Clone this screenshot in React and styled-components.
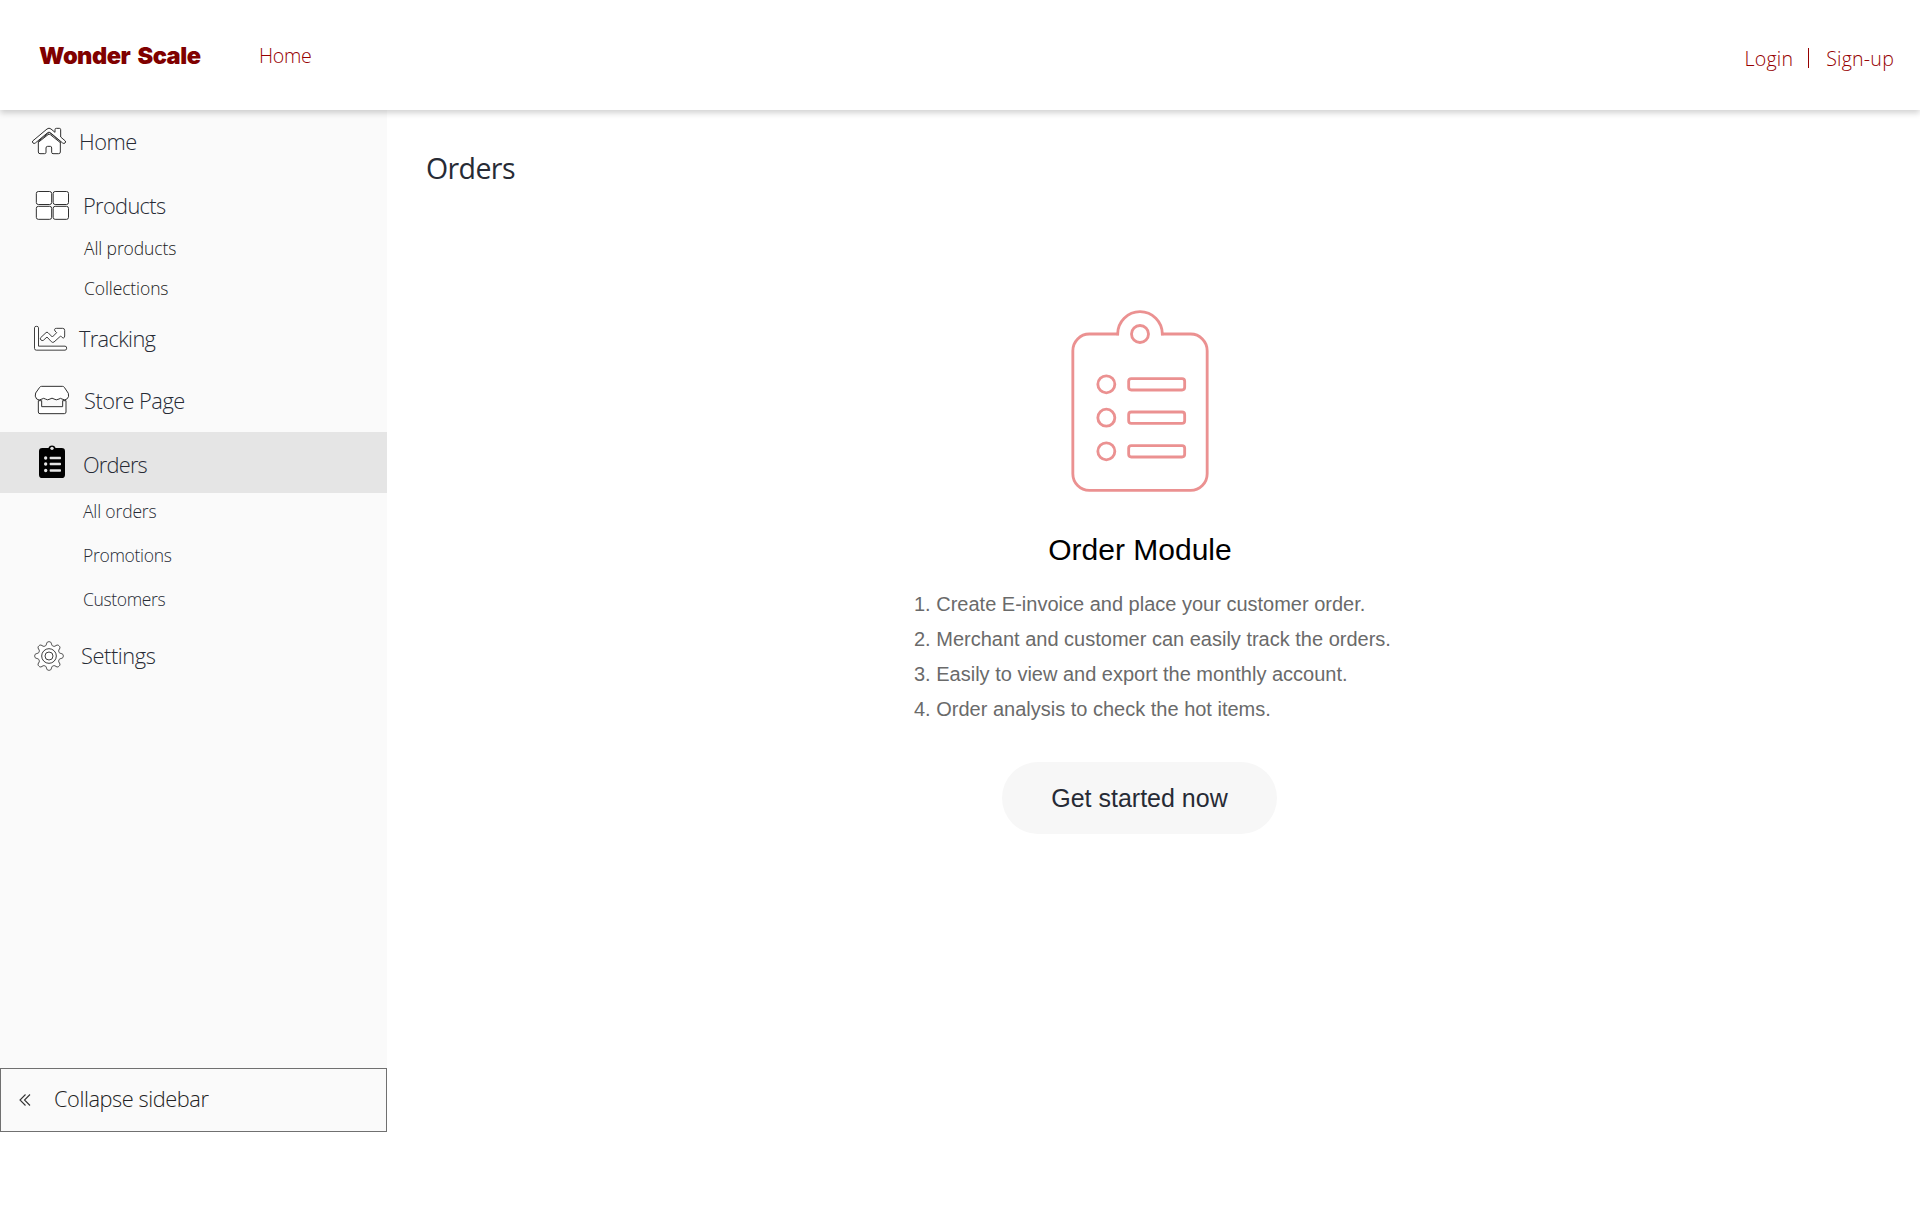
import React from "react";
import styled, { createGlobalStyle } from "styled-components";

const GlobalStyle = createGlobalStyle`
  *, *::before, *::after { box-sizing: border-box; }
  body {
    margin: 0;
    background: #fff;
    font-family: "Open Sans", "Noto Sans", sans-serif;
    font-weight: 300;
  }
  svg { display: block; flex: none; }
`;

const Page = styled.div`
  display: flex;
  flex-direction: column;
  height: 1215px;
  overflow: hidden;
`;

const Header = styled.header`
  position: relative;
  z-index: 1;
  display: flex;
  align-items: center;
  flex: none;
  height: 110px;
  padding: 0 26px 0 39px;
  background: #fff;
  box-shadow: 0 3px 6px rgba(0, 0, 0, 0.18);
`;

const Logo = styled.a`
  width: 220px;
  padding-top: 1px;
  color: #800000;
  font: 900 23.6px/30px Inter, sans-serif;
  letter-spacing: -0.5px;
  word-spacing: 3px;
  white-space: nowrap;
`;

const HeaderLink = styled.a`
  padding-top: ${(p) => p.$drop || 0}px;
  color: #960000;
  font-size: 19.6px;
  line-height: 28px;
  letter-spacing: ${(p) => p.$tracking}px;
`;

const Account = styled.div`
  display: flex;
  align-items: center;
  margin-left: auto;
  padding-top: 6px;
`;

const Divider = styled.span`
  width: 1px;
  height: 20px;
  margin: 0 17px 0 15px;
  background: #960000;
`;

const Body = styled.div`
  display: flex;
  flex: 1;
`;

const Sidebar = styled.nav`
  display: flex;
  flex-direction: column;
  width: 387px;
  height: 1022px;
  background: #fafafa;
`;

const Item = styled.a`
  display: flex;
  align-items: center;
  flex: none;
  height: ${(p) => p.$height}px;
  margin-bottom: ${(p) => p.$after || 0}px;
  padding-left: ${(p) => p.$inset}px;
  background: ${(p) => (p.$active ? "#e5e5e5" : "transparent")};
  color: #272b35;

  svg { margin-bottom: ${(p) => p.$lift || 0}px; }
`;

const ItemLabel = styled.span`
  margin-left: ${(p) => p.$gap}px;
  padding-top: ${(p) => p.$drop || 0}px;
  font-size: 21.8px;
  line-height: 30px;
  letter-spacing: ${(p) => p.$tracking}px;
  white-space: nowrap;
`;

const SubList = styled.div`
  display: flex;
  flex-direction: column;
  gap: ${(p) => p.$gap}px;
  padding: ${(p) => p.$pad || "0"};
`;

const SubItem = styled.a`
  height: 36px;
  padding-left: ${(p) => p.$inset || 83}px;
  color: ${(p) => p.$color || "#272b35"};
  font-size: 17.5px;
  line-height: 36px;
  letter-spacing: ${(p) => p.$tracking}px;
`;

const Collapse = styled.button`
  display: flex;
  align-items: center;
  height: 64px;
  margin-top: auto;
  padding: 0 0 0 18px;
  border: 1px solid #707070;
  background: #fafafa;
  color: #222;
  font-family: inherit;
  font-weight: 300;

  span { padding-bottom: 2px; }
`;

const Main = styled.main`
  display: flex;
  flex-direction: column;
  flex: 1;
  padding: 38px 27px 0 39px;
`;

const Title = styled.h1`
  margin: 0;
  color: #272b35;
  font-size: 28.5px;
  font-weight: 400;
  line-height: 40px;
  letter-spacing: -0.6px;
`;

const Intro = styled.section`
  display: flex;
  flex-direction: column;
  align-items: center;
  align-self: center;
  width: 480px;
  margin: 121px 39px 0 0;
  font-family: "Liberation Sans", Arial, sans-serif;
  font-weight: 400;
`;

const IntroTitle = styled.h2`
  margin: 39px 0 0;
  color: #000;
  font-size: 30px;
  font-weight: 400;
  line-height: 36px;
`;

const Steps = styled.ol`
  align-self: stretch;
  margin: 19px 0 0;
  padding: 0 0 0 14px;
  list-style: none;
  color: #6a6a6a;
  font-size: 20px;
  line-height: 35px;
  white-space: nowrap;
`;

const Start = styled.button`
  width: 275px;
  height: 72px;
  margin: 35px 1px 0 0;
  padding: 0;
  border: 0;
  border-radius: 36px;
  background: #f7f7f7;
  color: #272b35;
  font: 400 25px/72px "Liberation Sans", Arial, sans-serif;
`;

const line = { fill: "#fff", stroke: "#303030", strokeWidth: 3, strokeLinejoin: "round" };

const HomeIcon = () => (
  <svg width="34" height="28" viewBox="96 381 102 84" {...line}>
    <path d="M115 424V456Q115 461 120 461H134Q138 461 138 457V444Q138 439 143 439H151Q155 439 155 444V457Q155 461 159 461H176Q181 461 181 456V424L148 397Z" />
    <path d="M98 423L141 387Q147 382 153 387L165 397V389Q165 385 169 385H178Q182 385 182 389V411L196 423Q198 426 195 429Q192 432 188 429L151 398Q147 395 143 398L106 429Q102 432 99 429Q96 426 98 423Z" />
    <path d="M115 427L144 404Q147 401 151 404L181 428" fill="none" />
  </svg>
);

const ProductsIcon = () => (
  <svg width="35" height="31" viewBox="105 570 105 93" {...line}>
    <rect x="109" y="574.5" width="46" height="39" rx="6" />
    <rect x="159.500" y="574.5" width="46" height="39" rx="6" />
    <rect x="109" y="619" width="46" height="39" rx="6" />
    <rect x="159.500" y="619" width="46" height="39" rx="6" />
  </svg>
);

const TrackingIcon = () => (
  <svg width="35" height="26" viewBox="99 283 105 78" {...line} strokeWidth="2.8">
    <path d="M103.500 291Q103.500 287 109.500 287T115.500 291V346.500H195Q200 346.500 200 352.500T195 358.500H109Q103.500 358.500 103.500 353Z" />
    <path d="M122 321L138 306Q141 303 144 306L157 319L170 306L165 301Q162 297 165 294Q167 293 170 293H188Q194 293 194 299V316Q194 321 190 322Q187 322 182 316L162 334Q158 337 154 333L141 319L130 329Q126 331 123 328Q119 325 122 321Z" />
  </svg>
);

const StoreIcon = () => (
  <svg width="36" height="30" viewBox="102 465 108 90" {...line}>
    <path d="M115 512V546Q115 551 120 551H193Q198 551 198 546V512H188V530H125V512Z" />
    <path d="M125 469H187Q191 469 193 472L205 490Q208 500 202 506Q195 513 186 507Q181 503 177 507Q168 512 162 507Q156 502 150 507Q143 512 136 507Q131 503 126 507Q117 513 110 507Q103 499 107 489L119 472Q121 469 125 469Z" />
  </svg>
);

const OrdersIcon = () => (
  <svg width="28" height="36" viewBox="114 42 84 108">
    <path d="M127 57H145A12 12 0 0 1 167 57H185Q195 57 195 67V137Q195 147 185 147H127Q117 147 117 137V67Q117 57 127 57Z" fill="#000" />
    <g fill="#e5e5e5">
      <circle cx="156" cy="58" r="5" />
      {[87, 105, 124.5].map((y) => (
        <React.Fragment key={y}>
          <circle cx="137" cy={y} r="5" />
          <rect x="149" y={y - 3.5} width="34" height="7" rx="2" />
        </React.Fragment>
      ))}
    </g>
  </svg>
);

const gearPath = (() => {
  const points = [];
  for (let i = 0; i < 160; i += 1) {
    const a = (i / 160) * Math.PI * 2;
    const wave = Math.cos(8 * a);
    const r = 37.5 + 5.8 * Math.tanh(1.6 * wave);
    points.push(`${(148 + r * Math.cos(a)).toFixed(2)} ${(677.5 + r * Math.sin(a)).toFixed(2)}`);
  }
  return `M${points.join("L")}Z`;
})();

const SettingsIcon = () => (
  <svg width="32" height="32" viewBox="100 629.5 96 96" {...line} strokeWidth="2.8">
    <path d={gearPath} />
    <circle cx="148" cy="677.5" r="22" />
    <circle cx="148" cy="677.5" r="12" />
  </svg>
);

const CollapseIcon = () => (
  <svg width="12" height="14" viewBox="0 0 12 14" fill="none" stroke="#333" strokeWidth="1.1">
    <path d="M6.500 1.500L1 7L6.500 12.500M11 1.500L5.500 7L11 12.500" />
  </svg>
);

const ClipboardArt = () => (
  <svg width="140" height="184" viewBox="90 58 420 552" fill="none" stroke="#eb9191" strokeWidth="8.5">
    <path d="M237 133H148A49.500 50 0 0 0 98.500 183V552A49.500 50 0 0 0 148 602H452A49.500 50 0 0 0 501.500 552V183A49.500 50 0 0 0 452 133H363" />
    <path d="M233 137V133A67 67 0 0 1 367 133V137" />
    <circle cx="300" cy="133" r="25.500" />
    {[284, 384, 485].map((y) => (
      <React.Fragment key={y}>
        <circle cx="199" cy={y} r="25.500" />
        <rect x="266" y={y - 17} width="168" height="34" rx="8" />
      </React.Fragment>
    ))}
  </svg>
);

export default function App() {
  return (
    <Page>
      <GlobalStyle />
      <Header>
        <Logo>Wonder Scale</Logo>
        <HeaderLink $drop={1} $tracking={-0.3}>Home</HeaderLink>
        <Account>
          <HeaderLink $drop={1} $tracking={0.2}>Login</HeaderLink>
          <Divider />
          <HeaderLink $drop={1} $tracking={0.2}>Sign-up</HeaderLink>
        </Account>
      </Header>
      <Body>
        <Sidebar>
          <Item $height={62} $after={11} $inset={32}>
            <HomeIcon />
            <ItemLabel $gap={13} $drop={2} $tracking={-0.5}>Home</ItemLabel>
          </Item>
          <Item $height={45} $inset={35}>
            <ProductsIcon />
            <ItemLabel $gap={13} $drop={1} $tracking={-0.65}>Products</ItemLabel>
          </Item>
          <SubList $gap={4} $pad="2px 0">
            <SubItem $inset={84} $color="#222" $tracking={-0.1}>All products</SubItem>
            <SubItem $inset={84} $color="#222" $tracking={-0.1}>Collections</SubItem>
          </SubList>
          <Item $height={60} $inset={33} $lift={1}>
            <TrackingIcon />
            <ItemLabel $gap={11} $drop={2} $tracking={-0.65}>Tracking</ItemLabel>
          </Item>
          <Item $height={64} $inset={34}>
            <StoreIcon />
            <ItemLabel $gap={14} $drop={2} $tracking={-0.5}>Store Page</ItemLabel>
          </Item>
          <Item $height={61} $inset={38} $lift={3} $active>
            <OrdersIcon />
            <ItemLabel $gap={17} $drop={5} $tracking={-0.8}>Orders</ItemLabel>
          </Item>
          <SubList $gap={8}>
            <SubItem $tracking={-0.15}>All orders</SubItem>
            <SubItem $tracking={-0.3}>Promotions</SubItem>
            <SubItem $tracking={-0.35}>Customers</SubItem>
          </SubList>
          <Item $height={78} $inset={33}>
            <SettingsIcon />
            <ItemLabel $gap={16} $tracking={-0.4}>Settings</ItemLabel>
          </Item>
          <Collapse>
            <CollapseIcon />
            <ItemLabel $gap={23} $tracking={-0.44}>Collapse sidebar</ItemLabel>
          </Collapse>
        </Sidebar>
        <Main>
          <Title>Orders</Title>
          <Intro>
            <ClipboardArt />
            <IntroTitle>Order Module</IntroTitle>
            <Steps>
              <li>1. Create E-invoice and place your customer order.</li>
              <li>2. Merchant and customer can easily track the orders.</li>
              <li>3. Easily to view and export the monthly account.</li>
              <li>4. Order analysis to check the hot items.</li>
            </Steps>
            <Start>Get started now</Start>
          </Intro>
        </Main>
      </Body>
    </Page>
  );
}
